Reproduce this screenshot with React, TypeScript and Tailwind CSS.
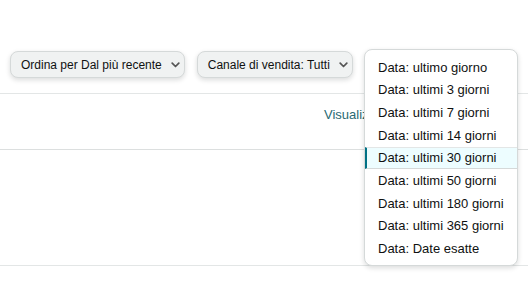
import React from "react";

const Chevron = () => (
  <svg width="9" height="6" viewBox="0 0 9 6" className="ml-[9px]">
    <path d="M1.2 1.2 L4.5 4.5 L7.8 1.2" fill="none" stroke="#555" strokeWidth="1.7" strokeLinecap="round" strokeLinejoin="round" />
  </svg>
);

const items = [
  "Data: ultimo giorno",
  "Data: ultimi 3 giorni",
  "Data: ultimi 7 giorni",
  "Data: ultimi 14 giorni",
  "Data: ultimi 30 giorni",
  "Data: ultimi 50 giorni",
  "Data: ultimi 180 giorni",
  "Data: ultimi 365 giorni",
  "Data: Date esatte",
];

export default function App() {
  return (
    <div className="relative w-[528px] h-[281px] bg-white overflow-hidden text-[#0f1111]" style={{ fontFamily: '"Liberation Sans", Arial, sans-serif' }}>
      <div className="h-[51px]" />
      <div className="flex gap-[12px] pl-[10px]">
        <button className="flex items-center h-[27px] pl-[10px] pr-[4px] rounded-[8px] bg-[#f0f2f2] border border-[#d5d9d9] shadow-[0_2px_5px_rgba(15,17,17,0.15)] text-[12px]">
          Ordina per Dal più recente
          <Chevron />
        </button>
        <button className="flex items-center h-[27px] pl-[10px] pr-[4px] rounded-[8px] bg-[#f0f2f2] border border-[#d5d9d9] shadow-[0_2px_5px_rgba(15,17,17,0.15)] text-[12px]">
          Canale di vendita: Tutti
          <Chevron />
        </button>
      </div>
      <div className="mt-[15px] border-t border-[#e3e6e6] h-[56px] pt-[11px] text-[13px] leading-[19px]">
        <div className="ml-[324px] text-[#2a6a73]">Visualizza</div>
      </div>
      <div className="border-t border-[#dcdfdf] h-[116px]" />
      <div className="border-t border-[#e3e6e6]" />

      <div className="absolute left-[364px] top-[49px] w-[154px] h-[217px] bg-white border border-[#d5d9d9] rounded-[8px] shadow-[0_2px_5px_rgba(15,17,17,0.15)] pt-[6px]">
        {items.map((t, i) =>
          i === 4 ? (
            <div
              key={t}
              className="h-[22.7px] flex items-center pl-[11px] text-[13px] whitespace-nowrap bg-[#edfdff] border-l-2 border-l-[#007185] border-b border-b-[#d5d9d9] border-t border-t-[#e3e6e6]"
            >
              {t}
            </div>
          ) : (
            <div key={t} className="h-[22.7px] flex items-center pl-[13px] text-[13px] whitespace-nowrap">
              {t}
            </div>
          )
        )}
      </div>
    </div>
  );
}
